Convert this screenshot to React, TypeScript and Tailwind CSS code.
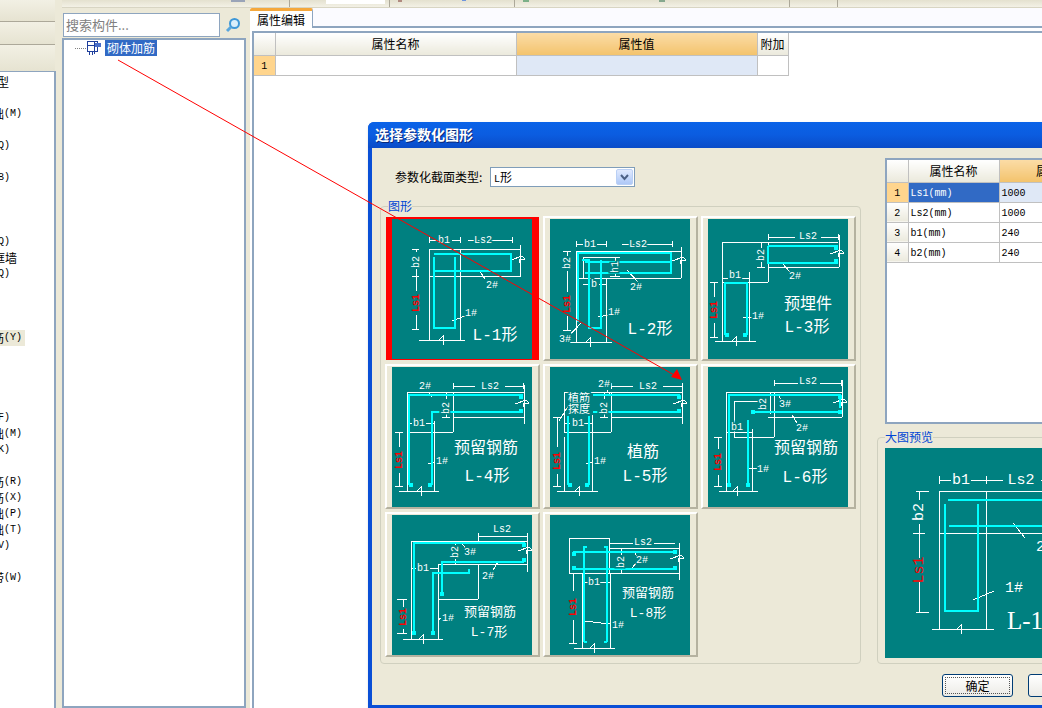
import React from 'react';

type Label = { t: string; x: number; y: number; s?: number; r?: boolean; c?: string };

type Plan = {
  white: string;
  cyan: string;
  dots?: number[][];
  labels: Label[];
};

const botBreak = (x: number, y: number) => `M${x - 4} ${y} L${x} ${y - 4} L${x} ${y + 5} M${x - 1} ${y} L${x + 3} ${y + 1}`;
const sideBreak = (x: number, y: number) => `M${x - 9} ${y + 1} L${x + 2} ${y - 3} L${x + 5} ${y} L${x - 1} ${y + 1} L${x} ${y + 4}`;

const plans: Plan[] = [
  {
    white: `M37 21H46M60 21H68M68 18V24M76 21H120M120 18V24M37 18V24M37 30V121M68 30V121M37 30H128M37 57H129M128 26V57M27 121H73 ${botBreak(51, 121)} ${sideBreak(128, 40)} M20 30H27M20 110H27M24 30V33M24 50V72M24 96V110M20 57H27M87 51L93 60M60 102L73 97`,
    cyan: 'M42 38V109H63V38M42 35H119V52H43',
    labels: [
      { t: 'b1', x: 52, y: 21 },
      { t: 'Ls2', x: 91, y: 21 },
      { t: 'b2', x: 24, y: 43, r: true },
      { t: 'Ls1', x: 24, y: 84, r: true, c: '#ff0000' },
      { t: '2#', x: 100, y: 66 },
      { t: '1#', x: 79, y: 94 },
      { t: 'L-1形', x: 103, y: 117, s: 16 },
    ],
  },
  {
    white: `M26 25H33M47 25H56M56 22V28M72 25H122M122 22V28M26 22V28M26 32V123M56 59V123M26 32H131M26 59H131M131 28V59M33 38V59M33 38H65M20 123H62 ${botBreak(40, 123)} ${sideBreak(131, 41)} M13 32H21M13 111H21M17 32V37M17 52V73M17 97V111M33 65H40M49 65H56M65 38V43M65 54V58M60 38H70M60 57H70M77 51L88 63M48 98L58 96M18 118L32 103`,
    cyan: 'M28 103V34H121V54H35M121 43H35M39 41V109H51V41M32 41H40',
    labels: [
      { t: 'b1', x: 40, y: 25 },
      { t: 'Ls2', x: 88, y: 25 },
      { t: 'b2', x: 17, y: 44, r: true },
      { t: 'Ls1', x: 17, y: 85, r: true, c: '#ff0000' },
      { t: 'b', x: 44, y: 65 },
      { t: 'h1', x: 65, y: 48, r: true },
      { t: '2#', x: 86, y: 68 },
      { t: '1#', x: 64, y: 93 },
      { t: '3#', x: 15, y: 120 },
      { t: 'L-2形', x: 100, y: 111, s: 16 },
    ],
  },
  {
    white: `M60 18H87M113 18H130M60 15V21M130 15V21M14 23H130M14 23V122M60 23V63M14 63H60M60 48H131M131 16V48M53 23V29M53 43V48M49 48H57M14 59H20M34 59H41M14 56V62M41 53V122M7 122H48 ${botBreak(28, 122)} ${sideBreak(131, 34)} M2 63H10M2 118H10M6 63V78M6 104V118M74 44L82 53M35 99L44 98`,
    cyan: 'M17 116V64H39V116M60 27H130M60 27V44H130',
    dots: [[19, 116], [37, 116], [128, 29], [128, 42]],
    labels: [
      { t: 'Ls2', x: 100, y: 17 },
      { t: 'b2', x: 53, y: 36, r: true },
      { t: 'b1', x: 27, y: 56 },
      { t: 'Ls1', x: 6, y: 91, r: true, c: '#ff0000' },
      { t: '2#', x: 87, y: 57 },
      { t: '1#', x: 50, y: 97 },
      { t: '预埋件', x: 100, y: 86, s: 16 },
      { t: 'L-3形', x: 99, y: 109, s: 16 },
    ],
  },
  {
    white: `M61 19H83M113 19H131M61 16V22M131 16V22M15 25H132M15 25V124M61 25V65M15 65H61M61 50H132M132 18V57M54 25V32M54 46V50M50 50H58M15 56H20M34 56H42M42 54V124M7 124H47 ${botBreak(29, 124)} ${sideBreak(132, 36)} M3 65H11M3 119H11M7 65V80M7 106V119M36 25L40 30M36 97L43 95`,
    cyan: 'M17 118V28H131M40 118V45H131',
    dots: [[19, 118], [38, 118], [129, 30], [129, 44]],
    labels: [
      { t: '2#', x: 33, y: 19 },
      { t: 'Ls2', x: 98, y: 19 },
      { t: 'b2', x: 54, y: 41, r: true },
      { t: 'b1', x: 27, y: 56 },
      { t: 'Ls1', x: 7, y: 93, r: true, c: '#ff0000' },
      { t: '1#', x: 50, y: 94 },
      { t: '预留钢筋', x: 94, y: 82, s: 16 },
      { t: 'L-4形', x: 95, y: 110, s: 16 },
    ],
  },
  {
    white: `M61 19H83M113 19H132M61 16V22M132 16V22M14 25H132M14 25V65M61 25V65M14 65H61M61 50H132M132 18V57M54 25V32M54 46V50M50 50H58M14 56H20M34 56H42M42 48V124M14 70V124M7 124H48 ${botBreak(29, 124)} ${sideBreak(132, 36)} M3 50H11M3 119H11M7 50V80M7 107V119M9 54L20 36M57 23L60 28M36 97L43 95`,
    cyan: 'M18 118V49M39 118V49M43 28H130M43 45H130',
    dots: [[20, 118], [37, 118], [129, 30], [129, 44]],
    labels: [
      { t: '2#', x: 54, y: 17 },
      { t: 'Ls2', x: 98, y: 19 },
      { t: 'b2', x: 54, y: 41, r: true },
      { t: 'b1', x: 28, y: 56 },
      { t: 'Ls1', x: 7, y: 94, r: true, c: '#ff0000' },
      { t: '1#', x: 50, y: 94 },
      { t: '植筋', x: 29, y: 32, s: 11 },
      { t: '探度', x: 29, y: 43, s: 11 },
      { t: '植筋', x: 93, y: 86, s: 16 },
      { t: 'L-5形', x: 95, y: 110, s: 16 },
    ],
  },
  {
    white: `M66 16H90M112 16H133M66 13V19M133 13V19M18 25H134M18 25V124M18 65H44M44 62V124M60 50H134M134 13V50M66 25V70M26 70H66M26 34V70M26 34H50M62 25V47M11 124H50 ${botBreak(29, 124)} ${sideBreak(134, 35)} M6 70H14M6 119H14M10 70V82M10 108V119M70 27L73 33M84 48L89 56M41 102L49 101`,
    cyan: 'M21 118V28H132V41M40 118V53M45 45H132',
    dots: [[21, 118], [40, 118], [132, 30], [132, 45], [45, 45]],
    labels: [
      { t: 'Ls2', x: 100, y: 14 },
      { t: 'b2', x: 55, y: 37, r: true },
      { t: 'b1', x: 29, y: 60 },
      { t: 'Ls1', x: 10, y: 95, r: true, c: '#ff0000' },
      { t: '3#', x: 77, y: 37 },
      { t: '2#', x: 94, y: 61 },
      { t: '1#', x: 55, y: 102 },
      { t: '预留钢筋', x: 98, y: 82, s: 16 },
      { t: 'L-6形', x: 97, y: 111, s: 16 },
    ],
  },
  {
    white: `M86 21H135M86 18V26M135 18V24M19 26H135M19 26V124M135 18V57M46 49H135M46 49V124M86 49V84M46 84H86M63 26V30M63 44V49M19 53H24M38 53H46M11 124H51 ${botBreak(31, 124)} ${sideBreak(135, 35)} M5 84H15M5 118H15M11 84V92M11 114V118M70 28L73 33M101 55L106 47M46 105L49 103`,
    cyan: 'M22 118V28H132V30M41 118V58H77V54M50 79V47H132',
    dots: [[22, 118], [41, 118], [50, 79], [132, 30], [132, 45]],
    labels: [
      { t: 'Ls2', x: 110, y: 14 },
      { t: 'b2', x: 63, y: 37, r: true },
      { t: 'b1', x: 31, y: 53 },
      { t: 'Ls1', x: 11, y: 102, r: true, c: '#ff0000' },
      { t: '3#', x: 78, y: 37 },
      { t: '2#', x: 96, y: 61 },
      { t: '1#', x: 56, y: 103 },
      { t: '预留钢筋', x: 98, y: 97, s: 13 },
      { t: 'L-7形', x: 97, y: 117, s: 13 },
    ],
  },
  {
    white: `M19 23H59M19 23V58M59 23V58M19 58H129M59 33H129M129 28V65M59 28H83M104 28H125M32 58V133M60 58V133M24 133H65 ${botBreak(44, 133)} ${sideBreak(129, 43)} M19 128H27M23 58V76M23 105V128M71 33V40M71 54V58M32 67H38M50 67H60M85 38L89 45L81 54M34 106L60 109`,
    cyan: 'M34 127V32H37M57 127V32H54M23 37H126M23 54H126M34 127H37M57 127H54',
    dots: [[24, 39], [125, 37], [24, 53], [125, 53]],
    labels: [
      { t: 'Ls2', x: 93, y: 27 },
      { t: 'b2', x: 71, y: 47, r: true },
      { t: 'b1', x: 44, y: 67 },
      { t: 'Ls1', x: 23, y: 92, r: true, c: '#ff0000' },
      { t: '2#', x: 92, y: 45 },
      { t: '1#', x: 68, y: 110 },
      { t: '预留钢筋', x: 98, y: 78, s: 13 },
      { t: 'L-8形', x: 98, y: 98, s: 13 },
    ],
  },
];

const SectionDrawing = ({ plan }: { plan: Plan }) => (
  <svg width="140" height="140" viewBox="0 0 140 140" className="block bg-[#008080]">
    <path d={plan.white} fill="none" stroke="#ffffff" strokeWidth="1" shapeRendering="crispEdges" />
    <path d={plan.cyan} fill="none" stroke="#00ffff" strokeWidth="2" shapeRendering="crispEdges" />
    {plan.dots?.map(([x, y]) => (
      <rect key={`${x}-${y}`} x={x - 2} y={y - 2} width="4" height="4" fill="#00ffff" />
    ))}
    {plan.labels.map(l => (
      <text
        key={l.t + l.x}
        x={l.x}
        y={l.y}
        fontSize={l.s ?? 10}
        fontWeight={l.c ? 700 : 400}
        fill={l.c ?? '#ffffff'}
        textAnchor="middle"
        dominantBaseline="central"
        fontFamily="'Liberation Mono','Noto Sans CJK SC',monospace"
        transform={l.r ? `rotate(-90 ${l.x} ${l.y})` : undefined}
        stroke="#008080"
        strokeWidth="3"
        paintOrder="stroke"
      >
        {l.t}
      </text>
    ))}
  </svg>
);

const BigPreview = () => (
  <svg width="210" height="210" viewBox="0 0 210 210" className="block bg-[#008080]">
    <path
      d={`M54 28V36M54 32H66M86 32H118M101 28V36M156 32H210M54 43V181M101 43V181M54 43H210M55 85H210M47 181H109 ${botBreak(76, 181)} M31 43H44M31 164H44M34 43V52M34 76V110M34 134V164M28 85H40M128 75L140 90M88 152L109 143`}
      fill="none"
      stroke="#ffffff"
      shapeRendering="crispEdges"
    />
    <path d="M60 56V163H93V56M63 52H210M64 78H210" fill="none" stroke="#00ffff" strokeWidth="2" shapeRendering="crispEdges" />
    {[
      { t: 'b1', x: 76, y: 32, s: 15 },
      { t: 'Ls2', x: 136, y: 32, s: 15 },
      { t: '2#', x: 160, y: 99, s: 15 },
      { t: '1#', x: 129, y: 140, s: 15 },
    ].map(l => (
      <text key={l.t} x={l.x} y={l.y} fontSize={l.s} fill="#ffffff" textAnchor="middle" dominantBaseline="central" fontFamily="'Liberation Mono',monospace">
        {l.t}
      </text>
    ))}
    <text x="34" y="64" fontSize="15" fill="#ffffff" textAnchor="middle" dominantBaseline="central" fontFamily="'Liberation Mono',monospace" transform="rotate(-90 34 64)">b2</text>
    <text x="34" y="122" fontSize="15" fill="#ff0000" textAnchor="middle" dominantBaseline="central" fontFamily="'Liberation Mono',monospace" transform="rotate(-90 34 122)">Ls1</text>
    <text x="122" y="172" fontSize="25" fill="#ffffff" dominantBaseline="central" fontFamily="'Liberation Serif','Noto Sans CJK SC',serif">L-1形</text>
  </svg>
);

const leftRows: { cjk?: string; code?: string; cls?: string }[] = [
  { cjk: '型', cls: 'w-[9px]' }, {},
  { cjk: '础', code: '(M)', cls: 'w-[22px]' }, {},
  { code: 'Q)', cls: 'w-[10px]' }, {},
  { code: 'B)', cls: 'w-[10px]' }, {}, {}, {},
  { code: 'Q)', cls: 'w-[10px]' },
  { cjk: '框墙', cls: 'w-[17px]' },
  { code: 'Q)', cls: 'w-[10px]' }, {}, {}, {},
  { cjk: '筋', code: '(Y)', cls: 'w-[25px] pr-[3px] bg-[#ece9d8]' }, {}, {}, {}, {},
  { code: 'F)', cls: 'w-[10px]' },
  { cjk: '础', code: '(M)', cls: 'w-[22px]' },
  { code: 'K)', cls: 'w-[10px]' }, {},
  { cjk: '筋', code: '(R)', cls: 'w-[22px]' },
  { cjk: '筋', code: '(X)', cls: 'w-[22px]' },
  { cjk: '础', code: '(P)', cls: 'w-[22px]' },
  { cjk: '础', code: '(T)', cls: 'w-[22px]' },
  { code: 'V)', cls: 'w-[10px]' }, {},
  { cjk: '带', code: '(W)', cls: 'w-[22px]' },
];

const Code = ({ children }: { children: React.ReactNode }) => (
  <span className="font-['Liberation_Mono',monospace] text-[10px]">{children}</span>
);

const headCell = 'border-r border-b border-[#c0c0c0] bg-gradient-to-b from-white to-[#ebe9dc] font-normal text-center p-0 leading-[16px]';
const hotCell = 'border-r border-b border-[#c0c0c0] bg-gradient-to-b from-[#fbdca6] to-[#f3c36c] font-normal text-center p-0 leading-[16px]';
const cell = 'border-r border-b border-[#c0c0c0] p-0 pl-[2px] leading-[16px]';
const rowHead = 'border-r border-b border-[#c0c0c0] bg-[#ffd58d] text-center p-0 leading-[16px]';

const params = [
  ['Ls1(mm)', '1000'],
  ['Ls2(mm)', '1000'],
  ['b1(mm)', '240'],
  ['b2(mm)', '240'],
];

const Toolbar = () => (
  <div className="flex h-[8px] shrink-0 bg-gradient-to-b from-[#e4e1cf] to-[#f3f1e6] border-b border-[#d8d5c3]">
    <div className="w-[228px] flex items-start border-r border-[#aca899]">
      <div className="ml-[169px] w-[14px] h-[2px] bg-[#9aa4b8]" />
    </div>
    <div className="w-[100px] border-r border-[#aca899] flex items-start">
      <div className="ml-[36px] w-[59px] h-[4px] bg-white" />
    </div>
    <div className="w-[125px] border-r border-[#aca899] flex items-start">
      <div className="ml-[8px] w-[4px] h-[2px] bg-[#b08a80]" />
      <div className="ml-[60px] w-[4px] h-[1px] bg-[#6f95dc]" />
    </div>
    <div className="w-[275px] border-r border-[#aca899] flex items-start">
      <div className="ml-[8px] w-[6px] h-[2px] bg-[#7cb088]" />
      <div className="ml-[130px] w-[6px] h-[2px] bg-[#86a88e]" />
    </div>
    <div className="w-[48px] border-r border-[#aca899]" />
    <div className="flex-1" />
  </div>
);

const ComponentTree = () => (
  <div className="w-[184px] shrink-0 flex flex-col">
    <div className="flex items-center pt-[5px] pb-[1px] pl-[1px]">
      <div className="w-[157px] h-[24px] bg-white border border-[#8ea5bf] flex items-center pl-[2px] text-[13px] text-[#808080]">
        搜索构件...
      </div>
      <svg width="16" height="16" viewBox="0 0 16 16" className="ml-[5px]">
        <circle cx="9.5" cy="6.5" r="4.5" fill="#d8eefb" stroke="#3d97d8" strokeWidth="2" />
        <path d="M6 10L2 14" stroke="#5aa7dd" strokeWidth="3" />
      </svg>
    </div>
    <div className="flex-1 bg-white border-2 border-[#8ea5bf] pl-[11px]">
      <div className="flex items-center h-[16px]">
        <div className="w-[11px] border-t border-dotted border-[#808080]" />
        <svg width="16" height="16" viewBox="0 0 16 16" shapeRendering="crispEdges">
          <rect x="1" y="1" width="10" height="10" fill="#ffffff" stroke="#1f3f9c" />
          <path d="M1 5H15M8 1V14M3 11V15M6 11V15" stroke="#1f3f9c" />
          <path d="M9 3H15V7H9z" fill="#4a6fc8" />
        </svg>
        <div className="ml-[3px] bg-[#316ac5] text-white px-[2px] leading-[16px]">砌体加筋</div>
      </div>
    </div>
  </div>
);

const PropertyPanel = () => (
  <div className="flex-1 ml-[4px] flex flex-col min-w-0">
    <div className="h-[20px] shrink-0 bg-[#fbfbff] border-b-2 border-[#8ea5bf] flex">
      <div className="w-[63px] h-[20px] bg-white border-t-[3px] border-[#f5a83c] border-r border-r-[#8ea5bf] rounded-t-[2px] flex items-center justify-center text-[12px]">
        属性编辑
      </div>
    </div>
    <div className="flex-1 bg-white pt-[3px] pl-[2px]">
      <div className="border-t-2 border-l-2 border-[#8ea5bf] h-full">
        <table className="border-collapse table-fixed w-[534px]">
          <colgroup>
            <col className="w-[21px]" />
            <col className="w-[241px]" />
            <col className="w-[241px]" />
            <col className="w-[31px]" />
          </colgroup>
          <tbody>
            <tr className="h-[22px]">
              <td className={headCell} />
              <td className={headCell}>属性名称</td>
              <td className={hotCell}>属性值</td>
              <td className={headCell}>附加</td>
            </tr>
            <tr className="h-[19px]">
              <td className={rowHead}><Code>1</Code></td>
              <td className={cell} />
              <td className={`${cell} bg-[#dfe8f6]`} />
              <td className={cell} />
            </tr>
          </tbody>
        </table>
      </div>
    </div>
  </div>
);

const ShapeDialog = () => (
  <div className="absolute left-[368px] top-[122px] w-[760px] h-[586px] flex flex-col bg-[#0a4fd6] rounded-t-[6px] pl-[4px] pb-[3px] shadow">
    <div className="h-[26px] pb-[2px] -ml-[4px] pl-[7px] shrink-0 rounded-t-[6px] bg-gradient-to-b from-[#0a63e8] via-[#0b5ce0] to-[#0a4cc8] flex items-center text-white font-bold text-[14px] [text-shadow:1px_1px_0_#0a2a7a]">
      选择参数化图形
    </div>
    <div className="flex-1 bg-[#ece9d8] flex text-[12px] text-black">
      <div className="w-[505px] pl-[8px] shrink-0">
        <div className="flex items-center h-[20px] mt-[19px] pl-[15px]">
          <span className="w-[95px] whitespace-nowrap">参数化截面类型:</span>
          <div className="w-[145px] h-[20px] bg-white border border-[#7f9db9] flex items-center justify-between pl-[3px] pr-[1px]">
            <span><Code>L</Code>形</span>
            <div className="w-[17px] h-[16px] rounded-[2px] bg-gradient-to-b from-[#e1eafe] to-[#aec8f7] border border-[#bad0f5] flex items-center justify-center">
              <svg width="9" height="7" viewBox="0 0 9 7"><path d="M1 1L4.5 5L8 1" fill="none" stroke="#4d6185" strokeWidth="2" /></svg>
            </div>
          </div>
        </div>
        <fieldset className="mt-[11px] w-[481px] border border-[#d0d0bf] rounded-[4px] pl-[4px] pt-[2px] pb-[6px]">
          <legend className="ml-[3px] text-[#0046d5] leading-[16px]">图形</legend>
          <div className="grid grid-cols-[155px_155px_155px] gap-[3px]">
            {plans.map((plan, i) => (
              i === 0 ? (
                <div key={i} className="h-[145px] flex items-center pl-[1px]">
                  <div className="w-[153px] h-[143px] bg-[#ff0000] flex items-center pl-[6px]">
                    <SectionDrawing plan={plan} />
                  </div>
                </div>
              ) : (
                <div key={i} className="h-[145px] border-2 border-t-white border-l-white border-r-[#b5b2a0] border-b-[#b5b2a0] flex items-center pl-[5px]">
                  <SectionDrawing plan={plan} />
                </div>
              )
            ))}
          </div>
        </fieldset>
      </div>
      <div className="flex-1 pl-[8px] min-w-0">
        <div className="mt-[10px] h-[266px] w-[259px] bg-white border-2 border-[#8ea5bf]">
          <table className="border-collapse table-fixed w-[257px]">
            <colgroup>
              <col className="w-[21px]" />
              <col className="w-[91px]" />
              <col className="w-[110px]" />
              <col className="w-[35px]" />
            </colgroup>
            <tbody>
              <tr className="h-[22px]">
                <td className={headCell} />
                <td className={headCell}>属性名称</td>
                <td className={hotCell}>属性值</td>
                <td className={headCell}>附加</td>
              </tr>
              {params.map(([name, val], i) => (
                <tr key={name} className="h-[19px]">
                  <td className={i === 0 ? rowHead : headCell}><Code>{i + 1}</Code></td>
                  <td className={i === 0 ? 'border-r border-b border-[#c0c0c0] bg-[#316ac5] text-white p-0 pl-[2px] leading-[16px]' : cell}><Code>{name}</Code></td>
                  <td className={i === 0 ? `${cell} bg-[#dfe8f6]` : cell}><Code>{val}</Code></td>
                  <td className={cell} />
                </tr>
              ))}
            </tbody>
          </table>
        </div>
        <fieldset className="-ml-[8px] mt-[5px] w-[240px] border border-[#d0d0bf] rounded-[4px] pl-[7px] pt-[3px] pb-[5px]">
          <legend className="text-[#0046d5] leading-[16px]">大图预览</legend>
          <BigPreview />
        </fieldset>
        <div className="flex gap-[15px] mt-[10px] ml-[57px]">
          <button className="w-[71px] h-[23px] p-[2px] rounded-[3px] border border-[#003c74] bg-gradient-to-b from-white to-[#ecebe6]">
            <div className="w-full h-full border border-dotted border-[#555555] flex items-center justify-center">确定</div>
          </button>
          <button className="w-[71px] h-[23px] rounded-[3px] border border-[#003c74] bg-gradient-to-b from-white to-[#ecebe6] flex items-center justify-center">
            取消
          </button>
        </div>
      </div>
    </div>
  </div>
);

const App = () => {
  return (
    <div className="relative w-[1042px] h-[708px] overflow-hidden bg-[#ece9d8] text-black text-[12px] font-['Noto_Sans_CJK_SC','Liberation_Sans',sans-serif]">
      <div className="flex h-full">
        <div className="w-[56px] shrink-0 flex flex-col">
          <div className="h-[22px] border-b border-[#aca899] bg-gradient-to-b from-[#f2f0e4] to-[#e6e3d1] mr-[1px]" />
          <div className="h-[23px] border-b border-[#aca899] bg-gradient-to-b from-[#f2f0e4] to-[#e6e3d1] mr-[1px]" />
          <div className="h-[26px] bg-gradient-to-b from-[#f2f0e4] to-[#e6e3d1] mr-[1px]" />
          <div className="flex-1 bg-white border-t border-r-2 border-[#8ea5bf] pt-[2px]">
            {leftRows.map((row, i) => (
              <div key={i} className="h-[16px]">
                {row.cls && (
                  <div className={`${row.cls} h-[16px] flex items-center justify-end overflow-hidden whitespace-nowrap leading-[16px]`}>
                    {row.cjk}
                    {row.code && <Code>{row.code}</Code>}
                  </div>
                )}
              </div>
            ))}
          </div>
        </div>
        <div className="flex-1 flex flex-col ml-[6px] min-w-0">
          <Toolbar />
          <div className="flex flex-1 min-h-0">
            <ComponentTree />
            <PropertyPanel />
          </div>
        </div>
      </div>

      <ShapeDialog />

      <svg width="1042" height="708" viewBox="0 0 1042 708" className="absolute inset-0 pointer-events-none">
        <path d="M118 60L676 376" stroke="#ff0000" fill="none" />
        <path d="M682 380L671 377L677 369z" fill="#ff0000" />
      </svg>
    </div>
  );
};

export default App;
